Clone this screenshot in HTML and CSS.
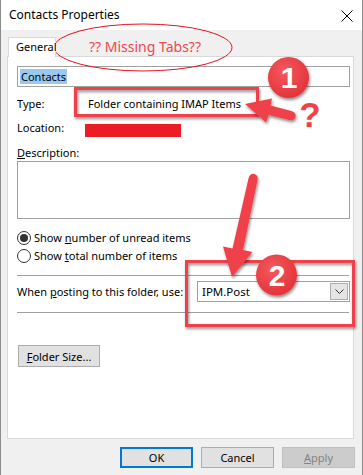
FILE: index.html
```html
<!DOCTYPE html>
<html>
<head>
<meta charset="utf-8">
<link rel="stylesheet" href="styles.css">
</head>
<body>
<div class="window">
  <div class="titlebar">
    <span class="title">Contacts Properties</span>
    <svg class="close" width="12" height="12" viewBox="0 0 12 12"><path d="M0.5 0.5 L11.5 11.5 M11.5 0.5 L0.5 11.5" stroke="#000" stroke-width="1" fill="none"/></svg>
  </div>
  <div class="body">
    <div class="tabs"><div class="tab">General</div></div>
    <div class="panel">
      <div class="field name-field"><span class="sel">Contacts</span></div>
      <div class="row type-row"><span class="label">Type:</span><span class="value">Folder containing IMAP Items</span></div>
      <div class="row loc-row"><span class="label">Location:</span><span class="redacted"></span></div>
      <div class="row desc-label"><u>D</u>escription:</div>
      <div class="field textarea"></div>
      <div class="row radio-row radio-first"><span class="radio checked"></span><span>Show <u>n</u>umber of unread items</span></div>
      <div class="row radio-row"><span class="radio"></span><span>Show <u>t</u>otal number of items</span></div>
      <div class="sep sep-first"></div>
      <div class="post-row">
        <span class="post-label">When <u>p</u>osting to this folder, use:</span>
        <div class="combo"><span class="combo-text">IPM.Post</span><span class="combo-btn"><svg width="9" height="5" viewBox="0 0 9 5"><path d="M0.5 0.5 L4.5 4.5 L8.5 0.5" stroke="#333" stroke-width="1" fill="none"/></svg></span></div>
      </div>
      <div class="sep sep-second"></div>
      <div class="btn folder-size"><u>F</u>older Size...</div>
    </div>
    <div class="buttons">
      <div class="btn dlg default">OK</div>
      <div class="btn dlg">Cancel</div>
      <div class="btn dlg disabled"><u>A</u>pply</div>
    </div>
  </div>

  <svg class="annotations" width="363" height="475" viewBox="0 0 363 475">
    <defs>
      <filter id="sh" x="-30%" y="-30%" width="160%" height="160%">
        <feDropShadow dx="1" dy="2" stdDeviation="1.6" flood-color="#000" flood-opacity="0.45"/>
      </filter>
      <radialGradient id="cg" cx="40%" cy="35%" r="70%">
        <stop offset="0%" stop-color="#f25a5f"/>
        <stop offset="100%" stop-color="#e33138"/>
      </radialGradient>
    </defs>
    <ellipse cx="143" cy="47.5" rx="89" ry="23.5" fill="none" stroke="#e81123" stroke-width="1"/>
    <text class="missing" x="145" y="52" text-anchor="middle">?? Missing Tabs??</text>

    <rect x="75.5" y="88.5" width="182" height="27" fill="none" stroke="#f0414a" stroke-width="3" filter="url(#sh)"/>
    <rect x="186.5" y="261.5" width="167" height="64" fill="none" stroke="#f0414a" stroke-width="3" filter="url(#sh)"/>

    <path d="M245 104 L272 98.5 L270.5 105.5 L291.5 111 Q296.5 112.5 295.5 117 Q294 121 289 120 L268.5 115 L266 122.5 Z" fill="#f0414a" filter="url(#sh)"/>
    <path d="M232 277 L223 246.5 L232.5 248.5 L248.5 178.5 Q250 173 254.5 174 Q258.5 175.5 257.5 180 L243 250 L252.5 252 Z" fill="#f0414a" filter="url(#sh)"/>

    <circle cx="288.5" cy="77.5" r="20.5" fill="url(#cg)" filter="url(#sh)"/>
    <text class="num" x="289" y="88" text-anchor="middle">1</text>
    <circle cx="276.5" cy="275" r="20.5" fill="url(#cg)" filter="url(#sh)"/>
    <text class="num" x="277" y="285.5" text-anchor="middle">2</text>

    <text class="qmark" x="310" y="127" text-anchor="middle">?</text>
  </svg>
</div>
</body>
</html>
```
FILE: styles.css
```css
* { box-sizing: border-box; }
html, body { margin: 0; padding: 0; }
body {
  width: 363px;
  height: 475px;
  overflow: hidden;
  font-family: "Noto Sans", "Open Sans", sans-serif;
  font-size: 11px;
  color: #000;
  background: #f0f0f0;
  white-space: nowrap;
}
.window {
  position: relative;
  width: 363px;
  height: 475px;
  border-left: 1px solid #8c8c8c;
  border-right: 1px solid #8c8c8c;
  background: #f0f0f0;
  display: flex;
  flex-direction: column;
}
.titlebar {
  height: 30px;
  background: #fff;
  display: flex;
  align-items: center;
  justify-content: space-between;
  padding: 0 9px 0 8px;
  font-size: 12px;
}
.title { line-height: 16px; }
.close { display: block; margin-top: 1px; }
.body {
  flex: 1;
  padding: 7px 8px 0 6px;
  display: flex;
  flex-direction: column;
}
.tabs { display: flex; height: 19px; position: relative; z-index: 1; }
.tab {
  width: 48px;
  height: 20px;
  margin-left: 1px;
  background: #fff;
  border: 1px solid #d9d9d9;
  border-bottom: none;
  padding-left: 7px;
  line-height: 18px;
}
.panel {
  height: 383px;
  background: #fff;
  border: 1px solid #d9d9d9;
  padding: 9px 3px 0 9px;
  display: flex;
  flex-direction: column;
}
.field {
  border: 1px solid #a0a0a0;
  background: #fff;
}
.name-field {
  height: 21px;
  padding: 1px 2px;
  line-height: 17px;
}
.sel { background: #99c9ef; padding: 0 1px; }
.row { display: flex; align-items: center; height: 16px; line-height: 16px; }
.type-row { margin-top: 9px; }
.loc-row { margin-top: 8px; }
.label { width: 71px; flex: none; }
.redacted {
  display: block;
  width: 96px;
  height: 13px;
  margin-left: -3px;
  margin-top: 4px;
  background: #ed1c24;
}
.desc-label { margin-top: 9px; }
.textarea { height: 58px; margin-top: 0; }
.radio-row { gap: 3px; }
.radio-first { margin-top: 11px; }
.radio-row + .radio-row { margin-top: 2px; }
.radio {
  width: 14px;
  height: 14px;
  flex: none;
  border: 1px solid #333;
  border-radius: 50%;
  background: #fff;
  display: flex;
  align-items: center;
  justify-content: center;
}
.radio.checked::after {
  content: "";
  width: 8px;
  height: 8px;
  border-radius: 50%;
  background: #333;
}
.sep { height: 1px; background: #a0a0a0; margin-right: 1px; }
.sep-first { margin-top: 11px; }
.post-row {
  margin-top: 5px;
  display: flex;
  align-items: center;
  justify-content: space-between;
}
.post-label { flex: none; }
.combo {
  width: 153px;
  height: 21px;
  flex: none;
  border: 1px solid #a0a0a0;
  background: #fff;
  display: flex;
  align-items: center;
  justify-content: space-between;
  padding: 0 1px 0 4px;
  font-size: 11.5px;
}
.combo-btn {
  width: 18px;
  height: 17px;
  background: #e5e5e5;
  border: 1px solid #adadad;
  display: flex;
  align-items: center;
  justify-content: center;
}
.combo-btn svg { display: block; }
.sep-second { margin-top: 10px; }
.btn {
  height: 22px;
  background: #e1e1e1;
  border: 1px solid #adadad;
  display: flex;
  align-items: center;
  justify-content: center;
}
.folder-size {
  width: 82px;
  margin-top: 32px;
  margin-left: 1px;
}
.buttons {
  display: flex;
  justify-content: flex-end;
  gap: 8px;
  margin-top: 8px;
  margin-right: -1px;
}
.dlg { width: 73px; height: 21px; }
.dlg.default { border: 2px solid #0078d7; }
.dlg.disabled { background: #cccccc; border-color: #bfbfbf; color: #838383; }
.annotations {
  position: absolute;
  left: -1px;
  top: 0;
  pointer-events: none;
}
.missing {
  font-family: "Noto Sans", sans-serif;
  font-size: 14px;
  fill: #f0474f;
}
.num {
  font-family: "Liberation Sans", Arial, sans-serif;
  font-weight: bold;
  font-size: 30px;
  fill: #fff;
}
.qmark {
  font-family: "Liberation Sans", Arial, sans-serif;
  font-weight: bold;
  font-size: 35px;
  fill: #f0414a;
}
```
